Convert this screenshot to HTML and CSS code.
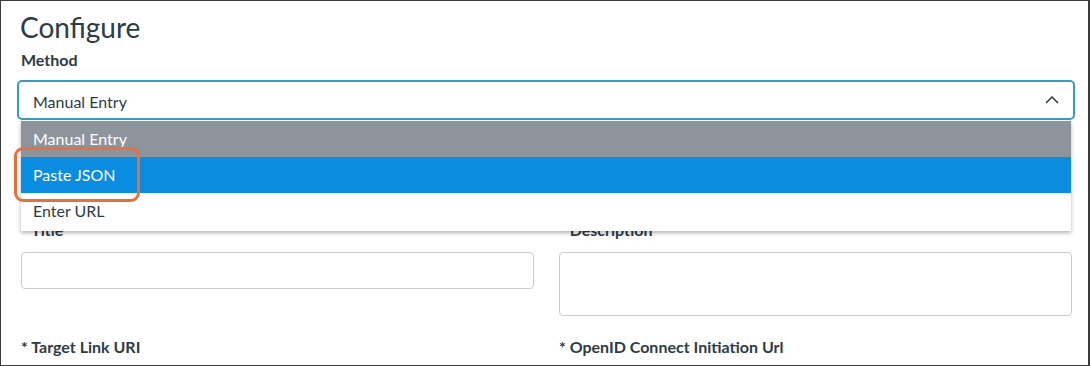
FILE: index.html
```html
<!DOCTYPE html>
<html lang="en">
<head>
    <meta charset="UTF-8">
    <meta name="viewport" content="width=device-width, initial-scale=1.0">
    <title>Configure</title>
    <link rel="stylesheet" href="styles.css">
</head>
<body>
    <div class="frame">
        <h1 class="heading">Configure</h1>
        <label class="field-label">Method</label>
        <div class="select-wrap">
            <div class="select">
                <span>Manual Entry</span>
                <svg class="chevron" width="14" height="8" viewBox="0 0 14 8">
                    <path d="M1 7 L7 1 L13 7" fill="none" stroke="#2d3b45" stroke-width="1.5"/>
                </svg>
            </div>
            <ul class="options">
                <li class="opt current">Manual Entry</li>
                <li class="opt active">Paste JSON</li>
                <li class="opt">Enter URL</li>
            </ul>
            <div class="callout"></div>
        </div>

        <div class="fields">
            <div class="field">
                <label class="field-label">* Title</label>
                <div class="input"></div>
            </div>
            <div class="field">
                <label class="field-label">* Description</label>
                <div class="input textarea"></div>
            </div>
            <div class="field">
                <label class="field-label">* Target Link URI</label>
            </div>
            <div class="field">
                <label class="field-label">* OpenID Connect Initiation Url</label>
            </div>
        </div>
    </div>
</body>
</html>
```

FILE: styles.css
```css
body {
    margin: 0;
    padding: 0;
    background: #fff;
    color: #2d3b45;
    font-family: 'Lato', 'Liberation Sans', sans-serif;
}
.frame {
    box-sizing: border-box;
    width: 1090px;
    height: 366px;
    overflow: hidden;
    border: 1px solid #3d3d3d;
    border-right-width: 2px;
    padding: 9px 13px 0 16px;
}
.heading {
    margin: 0 0 3px 3px;
    font-size: 28px;
    line-height: 35px;
    font-weight: 400;
}
.field-label {
    display: block;
    font-size: 16px;
    line-height: 24px;
    font-weight: 700;
}
.frame > .field-label { margin-left: 4px; }
.select-wrap {
    position: relative;
    margin-top: 8px;
}
.select {
    box-sizing: border-box;
    height: 40px;
    border: 2px solid #3a9dbd;
    border-radius: 5px;
    padding: 0 0 0 14px;
    display: flex;
    align-items: center;
    justify-content: space-between;
    font-size: 16px;
    line-height: 19px;
}
.select span { padding-top: 2px; }
.chevron { margin-right: 14px; }
.options {
    position: absolute;
    top: 41px;
    left: 4px;
    right: 4px;
    margin: 0;
    padding: 0 0 2px;
    list-style: none;
    background: #fff;
    box-shadow: 0 2px 4px rgba(0, 0, 0, 0.3);
    z-index: 2;
}
.opt {
    height: 36px;
    line-height: 36px;
    padding-left: 12px;
    font-size: 16px;
}
.opt.current { background: #8d949b; color: #fff; }
.opt.active { background: #0a8de0; color: #fff; }
.callout {
    position: absolute;
    top: 67px;
    left: -3px;
    width: 120px;
    height: 49px;
    border: 3px solid #e8703a;
    border-radius: 9px;
    z-index: 3;
}
.fields {
    display: grid;
    grid-template-columns: 513px 513px;
    column-gap: 25px;
    row-gap: 19px;
    margin: 98px 0 0 4px;
}
.input {
    box-sizing: border-box;
    height: 37px;
    margin-top: 10px;
    border: 1px solid #c8cdd1;
    border-radius: 4px;
}
.input.textarea { height: 64px; }
```
